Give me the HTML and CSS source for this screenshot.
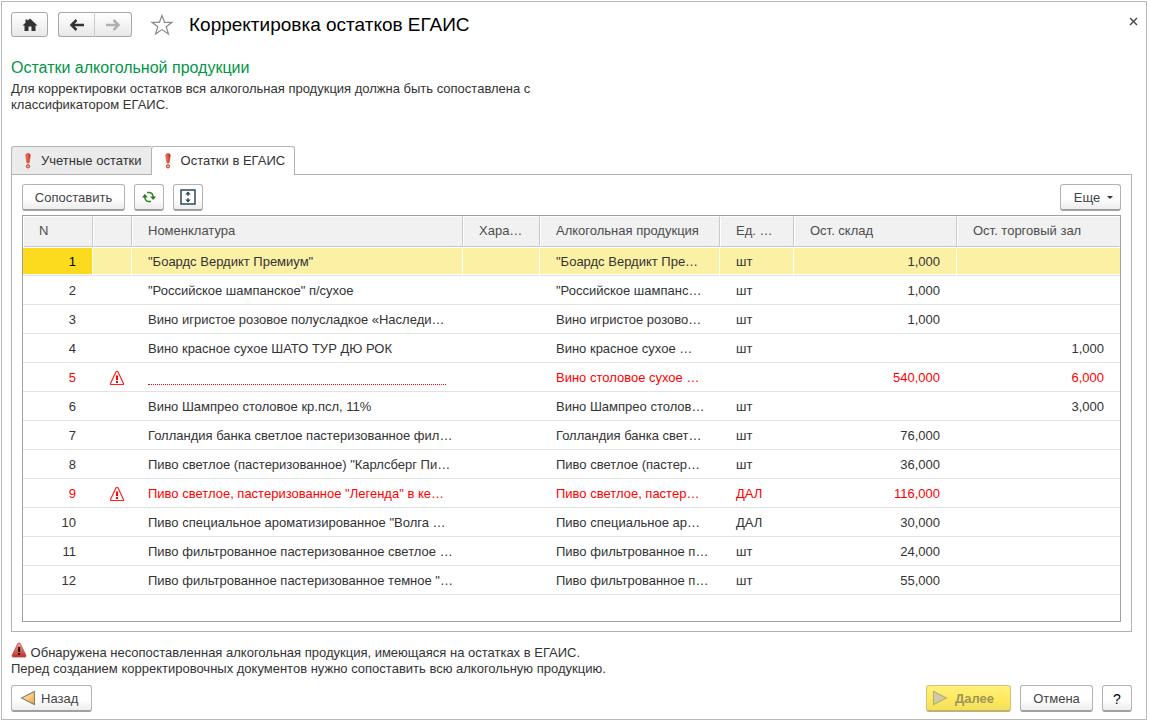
FILE: index.html
```html
<!DOCTYPE html>
<html lang="ru">
<head>
<meta charset="utf-8">
<title>Корректировка остатков ЕГАИС</title>
<link rel="stylesheet" href="styles.css">
</head>
<body>
<svg class="sprite" width="0" height="0" aria-hidden="true">
  <defs>
    <linearGradient id="gRed" x1="0" y1="0" x2="0" y2="1"><stop offset="0" stop-color="#f0a79c"/><stop offset="1" stop-color="#c22d20"/></linearGradient>
    <linearGradient id="gMark" x1="0" y1="0" x2="1" y2="0"><stop offset="0" stop-color="#f08a70"/><stop offset="1" stop-color="#c8281a"/></linearGradient>
    <linearGradient id="gOrange" x1="0" y1="0" x2="1" y2="1"><stop offset="0" stop-color="#fff0cc"/><stop offset="1" stop-color="#f0a53c"/></linearGradient>
    <symbol id="mark" viewBox="0 0 6 16"><path d="M3 .5C4.500 .5 5.500 1.300 5.300 2.800L4 10H2L.7 2.800C.5 1.300 1.500.5 3 .5Z" fill="url(#gMark)" stroke="#d4432f" stroke-width=".6"/><circle cx="3" cy="13.300" r="1.700" fill="#f3a28f" stroke="#cc3422" stroke-width=".9"/></symbol>
    <symbol id="warn" viewBox="0 0 16 16"><path d="M7.200 1.500h1.600L14.500 13.500V14.500H1.500V13.500Z" fill="#fff" stroke="#f22" stroke-width="1.200" stroke-linejoin="round"/><path d="M7 5.500h2V10H7zM7 11h2v2H7z" fill="#f00"/></symbol>
  </defs>
</svg>
<main class="window">
  <header class="titlebar">
    <button class="btn home" aria-label="Начальная страница"><svg width="16" height="14" viewBox="0 0 16 14"><path d="M8 .5 15.500 7.500H13.500V13H9.500V8.500h-3V13H2.500V7.500H.5L3.500 4.700V1.500h2V2.800Z" fill="#333"/></svg></button>
    <div class="nav">
      <button class="btn" aria-label="Назад по истории"><svg width="16" height="12" viewBox="0 0 16 12"><path d="M15 6H4M7.500 1 2.500 6l5 5" fill="none" stroke="#333" stroke-width="2.500"/></svg></button>
      <button class="btn" aria-label="Вперед по истории"><svg width="16" height="12" viewBox="0 0 16 12"><path d="M1 6h11M8.500 1l5 5-5 5" fill="none" stroke="#b0b0b0" stroke-width="2.500"/></svg></button>
    </div>
    <button class="plain star" aria-label="В избранное"><svg width="24" height="22" viewBox="0 0 24 22"><path d="M12 1.500 14.600 8.300H22L16.200 12.700 18.500 20 12 15.600 5.500 20 7.800 12.700 2 8.300H9.400Z" fill="#fff" stroke="#8a8a8a" stroke-width="1.200"/></svg></button>
    <h1>Корректировка остатков ЕГАИС</h1>
    <button class="plain close" aria-label="Закрыть"><svg width="9" height="9" viewBox="0 0 9 9"><path d="M1 1l7 7M8 1 1 8" stroke="#444" stroke-width="1.400"/></svg></button>
  </header>

  <h2>Остатки алкогольной продукции</h2>
  <p class="hint">Для корректировки остатков вся алкогольная продукция должна быть сопоставлена с классификатором ЕГАИС.</p>

  <div class="tabs" role="tablist">
    <button class="tab" role="tab" aria-selected="false"><svg width="6" height="16"><use href="#mark"/></svg>Учетные остатки</button>
    <button class="tab active" role="tab" aria-selected="true"><svg width="6" height="16"><use href="#mark"/></svg>Остатки в ЕГАИС</button>
  </div>

  <section class="panel">
    <div class="toolbar">
      <button class="btn match">Сопоставить</button>
      <button class="btn square" aria-label="Обновить"><svg width="14" height="12" viewBox="0 0 14 12"><path d="M5 1.500H7.500Q11 2 11.200 6M9 10.500H6.500Q3 10 2.800 6" fill="none" stroke="#2d8a1f" stroke-width="1.500"/><path d="M8.200 5.500H14L11.100 9ZM0 6.500H5.800L2.900 3Z" fill="#2a7a1c"/></svg></button>
      <button class="btn square" aria-label="Изменить высоту"><svg width="16" height="16" viewBox="0 0 16 16"><path d="M1 1h14v14H1z" fill="#fff" stroke="#2a4a62" stroke-width="1.500"/><path d="M8 3v4M8 9v4" stroke="#2a4a62" stroke-width="1.200"/><path d="M8 2.500 10.800 5.500H5.200ZM8 13.500 10.800 10.500H5.200Z" fill="#2a4a62"/></svg></button>
      <button class="btn more">Еще<svg width="6" height="3" viewBox="0 0 6 3"><path d="M0 0h6L3 3Z" fill="#333"/></svg></button>
    </div>
    <div class="grid">
      <table>
        <colgroup><col class="c-n"><col class="c-icon"><col class="c-name"><col class="c-char"><col class="c-alc"><col class="c-unit"><col class="c-stock"><col></colgroup>
        <thead><tr><th>N</th><th></th><th>Номенклатура</th><th>Хара…</th><th>Алкогольная продукция</th><th>Ед. …</th><th>Ост. склад</th><th>Ост. торговый зал</th></tr></thead>
        <tbody>
          <tr class="selected"><td>1</td><td></td><td>"Боардс Вердикт Премиум"</td><td></td><td>"Боардс Вердикт Пре…</td><td>шт</td><td>1,000</td><td></td></tr>
          <tr><td>2</td><td></td><td>"Российское шампанское" п/сухое</td><td></td><td>"Российское шампанс…</td><td>шт</td><td>1,000</td><td></td></tr>
          <tr><td>3</td><td></td><td>Вино игристое розовое полусладкое «Наследи…</td><td></td><td>Вино игристое розово…</td><td>шт</td><td>1,000</td><td></td></tr>
          <tr><td>4</td><td></td><td>Вино красное сухое ШАТО ТУР ДЮ РОК</td><td></td><td>Вино красное сухое …</td><td>шт</td><td></td><td>1,000</td></tr>
          <tr class="error"><td>5</td><td><svg width="16" height="16"><use href="#warn"/></svg></td><td><span class="missing"></span></td><td></td><td>Вино столовое сухое …</td><td></td><td>540,000</td><td>6,000</td></tr>
          <tr><td>6</td><td></td><td>Вино Шампрео столовое кр.псл, 11%</td><td></td><td>Вино Шампрео столов…</td><td>шт</td><td></td><td>3,000</td></tr>
          <tr><td>7</td><td></td><td>Голландия банка светлое пастеризованное фил…</td><td></td><td>Голландия банка свет…</td><td>шт</td><td>76,000</td><td></td></tr>
          <tr><td>8</td><td></td><td>Пиво светлое (пастеризованное) "Карлсберг Пи…</td><td></td><td>Пиво светлое (пастер…</td><td>шт</td><td>36,000</td><td></td></tr>
          <tr class="error"><td>9</td><td><svg width="16" height="16"><use href="#warn"/></svg></td><td>Пиво светлое, пастеризованное "Легенда" в ке…</td><td></td><td>Пиво светлое, пастер…</td><td>ДАЛ</td><td>116,000</td><td></td></tr>
          <tr><td>10</td><td></td><td>Пиво специальное ароматизированное "Волга …</td><td></td><td>Пиво специальное ар…</td><td>ДАЛ</td><td>30,000</td><td></td></tr>
          <tr><td>11</td><td></td><td>Пиво фильтрованное пастеризованное светлое …</td><td></td><td>Пиво фильтрованное п…</td><td>шт</td><td>24,000</td><td></td></tr>
          <tr><td>12</td><td></td><td>Пиво фильтрованное пастеризованное темное "…</td><td></td><td>Пиво фильтрованное п…</td><td>шт</td><td>55,000</td><td></td></tr>
        </tbody>
      </table>
    </div>
  </section>

  <p class="notice"><svg width="16" height="16" viewBox="0 0 16 16"><path d="M7 1.200h2L15 13.500 14.500 15h-13L1 13.500Z" fill="url(#gRed)" stroke="#b8483e" stroke-width=".8"/><path d="M7 5h2.200v5H7zM7 11h2.200v2H7z" fill="#301010"/></svg> Обнаружена несопоставленная алкогольная продукция, имеющаяся на остатках в ЕГАИС.<br>Перед созданием корректировочных документов нужно сопоставить всю алкогольную продукцию.</p>

  <footer class="actions">
    <button class="btn back"><svg width="16" height="16" viewBox="0 0 16 16"><path d="M14.500 1.500V14.500L1.500 8Z" fill="url(#gOrange)" stroke="#8d8068" stroke-width="1.100"/></svg>Назад</button>
    <button class="btn next" disabled><svg width="16" height="16" viewBox="0 0 16 16"><path d="M1.500 1.500V14.500L14.500 8Z" fill="#d3cba0" stroke="#b5ad80" stroke-width="1.100"/></svg>Далее</button>
    <button class="btn cancel">Отмена</button>
    <button class="btn help" aria-label="Справка">?</button>
  </footer>
</main>
</body>
</html>
```

FILE: styles.css
```css
* { box-sizing: border-box; }

body {
  margin: 0;
  padding: 1px 3px 2px 1px;
  min-height: 100vh;
  display: flex;
  background: #fff;
  color: #333;
  font: 13px/16px "Liberation Sans", Arial, sans-serif;
}

.sprite { position: absolute; }

h1, h2, p { margin: 0; font-weight: normal; }

.window {
  flex: 1;
  min-width: 0;
  display: flex;
  flex-direction: column;
  padding: 10px 14px 7px 9px;
  border: 1px solid #b8b8b8;
}

button { font: inherit; color: inherit; }

.btn {
  display: flex;
  align-items: center;
  justify-content: center;
  height: 27px;
  padding: 1px 0 0;
  border: 1px solid #b3b3b3;
  border-bottom: 2px solid #a0a0a0;
  border-radius: 3px;
  background: linear-gradient(#fff 55%, #ececec);
  color: #444;
}

.plain {
  display: flex;
  padding: 0;
  border: 0;
  background: none;
}

.titlebar {
  display: flex;
  align-items: center;
  height: 25px;
}

.titlebar .btn {
  width: 37px;
  height: 25px;
  padding: 0;
  border-bottom-width: 1px;
  background: linear-gradient(#fff, #e8e8e8);
  border-color: #a8a8a8;
}

.nav { display: flex; margin-left: 10px; }
.nav .btn:first-child { border-radius: 3px 0 0 3px; border-right-color: #ccc; }
.nav .btn:last-child { border-radius: 0 3px 3px 0; border-left: 0; }

.star { margin-left: 18px; }

h1 {
  margin-left: 15px;
  padding-top: 1px;
  color: #000;
  font-size: 19px;
  line-height: 24px;
}

.close { margin: 0 -6px 6px auto; }

h2 {
  margin-top: 21px;
  color: #009646;
  font-size: 16px;
  line-height: 20px;
}

.hint { max-width: 530px; margin-top: 3px; }

.tabs {
  position: relative;
  display: flex;
  align-items: flex-start;
  margin: 33px 0 -1px;
}

.tab {
  display: flex;
  align-items: center;
  gap: 10px;
  height: 28px;
  padding: 0 9px 0 13px;
  border: 1px solid #b3b3b3;
  border-right: 0;
  border-bottom: 0;
  border-radius: 3px 0 0 0;
  background: #ebebeb;
}

.tab.active {
  height: 29px;
  border-right: 1px solid #b3b3b3;
  border-radius: 3px 3px 0 0;
  background: #fff;
}

.panel {
  flex: 1;
  display: flex;
  flex-direction: column;
  padding: 9px 10px;
  border: 1px solid #b3b3b3;
}

.toolbar { display: flex; gap: 9px; margin-bottom: 4px; }
.match { width: 103px; }
.square { width: 30px; padding: 0; }
.more { width: 61px; margin-left: auto; gap: 7px; padding-left: 6px; }

.grid { flex: 1; border: 1px solid #a0a0a0; }

table {
  width: 100%;
  table-layout: fixed;
  border-collapse: separate;
  border-spacing: 0;
}

.c-n { width: 70px; }
.c-icon { width: 39px; }
.c-name { width: 331px; }
.c-char { width: 77px; }
.c-alc { width: 180px; }
.c-unit { width: 74px; }
.c-stock { width: 163px; }

th {
  height: 31px;
  padding: 0 0 1px 15px;
  border: 1px solid #fff;
  border-right-color: #c8c8c8;
  border-bottom-color: #c8c8c8;
  background: #f1f1f1;
  color: #4d4d4d;
  font-weight: normal;
  text-align: left;
  white-space: nowrap;
}
th:last-child { border-right-color: #f1f1f1; }

td {
  height: 29px;
  padding: 2px 17px 0 16px;
  border-bottom: 1px solid #e3e3e3;
  white-space: nowrap;
}

td:nth-child(1), td:nth-child(7), td:nth-child(8) { text-align: right; }
td:nth-child(8) { padding-right: 16px; }
td:nth-child(2) { padding: 0; }
td svg { display: block; margin: 2px 0 0 16px; }

.selected td {
  padding-top: 0;
  padding-right: 16px;
  border-top: 1px solid #fff;
  border-right: 1px solid #fff;
  background: #fcf0a4;
  box-shadow: inset 0 -1px #fff;
}
.selected td:nth-child(1) { background: #fcdb1f; color: #000; }
.selected td:last-child { border-right: 0; }

.error { color: #f00; }

.missing { display: block; height: 14px; border-bottom: 1px dotted #f00; }

.notice { margin-top: 10px; }
.notice svg { height: 16px; margin-bottom: -1px; vertical-align: 0; }

.actions { display: flex; gap: 9px; margin-top: 8px; }
.back { width: 81px; gap: 5px; justify-content: flex-start; padding-left: 8px; }
.next {
  width: 85px;
  margin-left: auto;
  gap: 7px;
  justify-content: flex-start;
  padding-left: 5px;
  border-color: #cfc47a;
  border-bottom-color: #bdb36a;
  background: linear-gradient(#fff07a, #fee95a 60%, #f2de62);
  color: #9c9460;
  font-weight: bold;
}
.back svg, .next svg { margin-bottom: 2px; }
.cancel { width: 73px; }
.help { width: 30px; color: #000; font-size: 14px; }
```
